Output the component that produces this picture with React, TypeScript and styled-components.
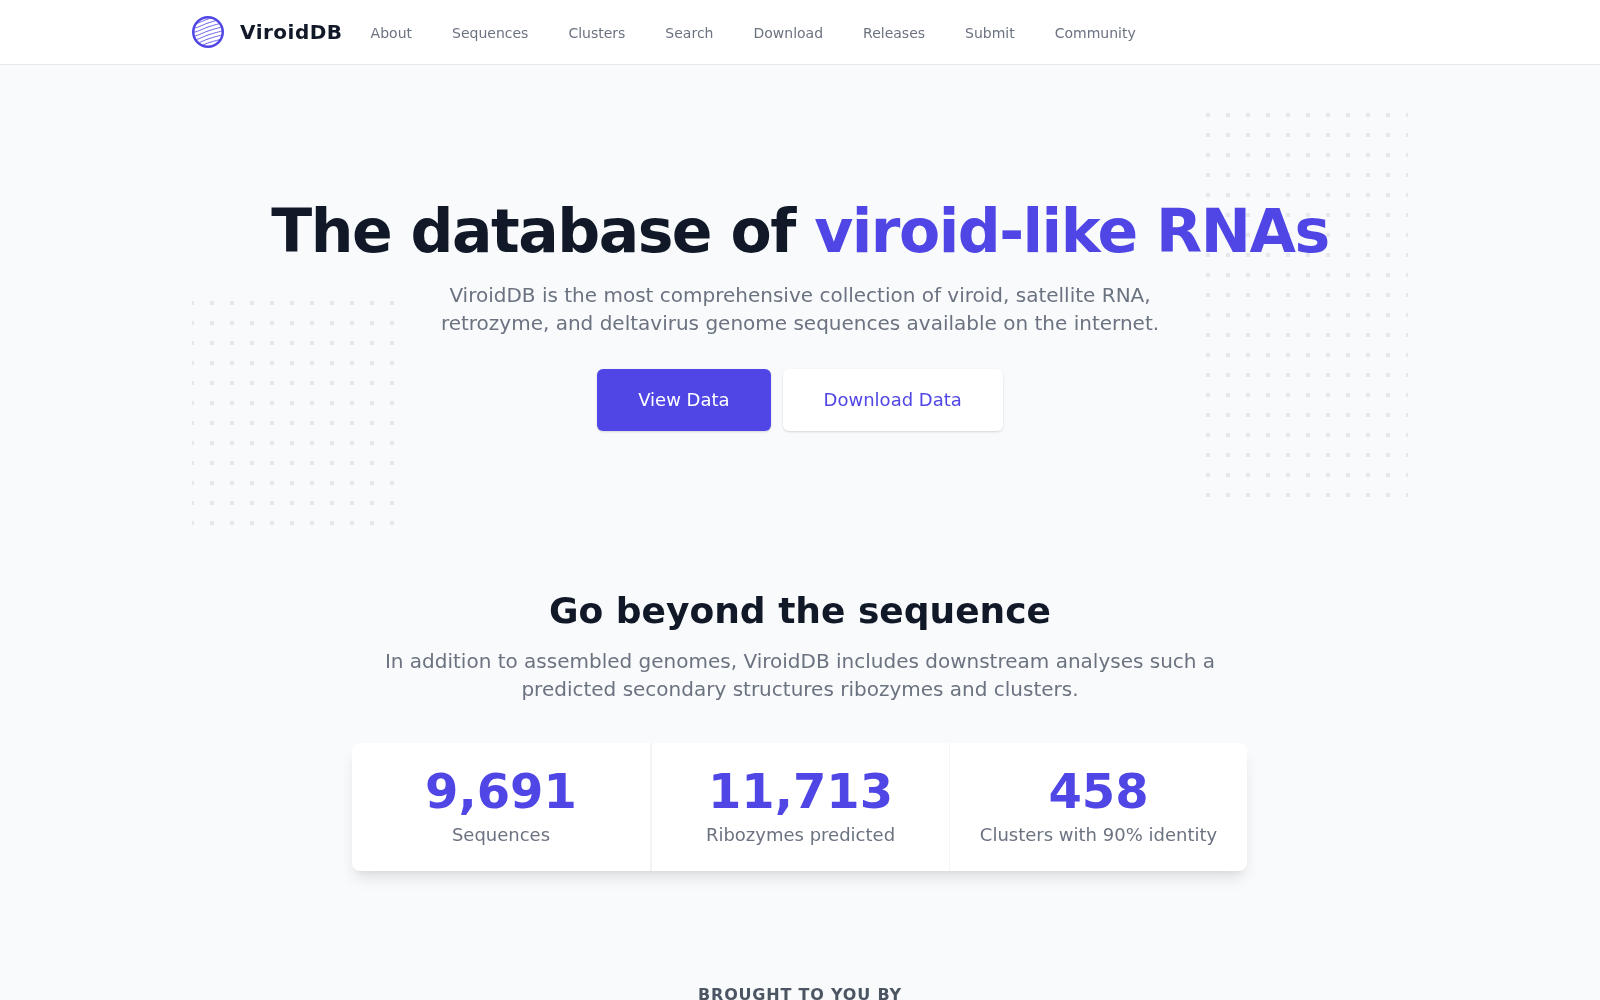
import React from "react";
import styled, { createGlobalStyle } from "styled-components";

const Global = createGlobalStyle`
  html, body { margin: 0; padding: 0; background: #f9fafb; }
  body { font-family: "DejaVu Sans", sans-serif; line-height: 1.5; -webkit-font-smoothing: antialiased; }
  #root { height: 1000px; overflow: hidden; will-change: transform; }
  * { box-sizing: border-box; }
`;

const Header = styled.header`
  height: 65px;
  background: #fff;
  border-bottom: 1px solid #e5e7eb;
`;
const HeaderInner = styled.div`
  width: 1216px;
  height: 64px;
  margin: 0 auto;
  display: flex;
  align-items: center;
`;
const Brand = styled.a`
  display: flex;
  align-items: center;
  gap: 16px;
  margin-right: 28px;
`;
const BrandName = styled.span`
  font-size: 20px;
  font-weight: 700;
  letter-spacing: 0.5px;
  color: #111827;
`;
const Nav = styled.nav`
  display: flex;
  gap: 40px;
`;
const NavLink = styled.a`
  padding-top: 4px;
  border-bottom: 2px solid transparent;
  font-size: 14px;
  line-height: 20px;
  color: #6b7280;
`;

const Hero = styled.section`
  position: relative;
  width: 1216px;
  margin: 0 auto;
  padding-top: 136px;
  text-align: center;
`;
const Dots = styled.svg<{ $side: "left" | "right" }>`
  position: absolute;
  ${(p) => (p.$side === "left" ? "left: 0; top: 236px;" : "right: 0; top: 48px;")}
`;
const Title = styled.h1`
  position: relative;
  margin: 0;
  font-size: 60px;
  line-height: 60px;
  font-weight: 800;
  letter-spacing: -1.5px;
  color: #111827;
`;
const Accent = styled.span`
  color: #4f46e5;
`;
const Lead = styled.p`
  position: relative;
  margin: 20px auto 0;
  max-width: 768px;
  font-size: 20px;
  line-height: 28px;
  color: #6b7280;
`;
const Actions = styled.div`
  position: relative;
  display: flex;
  justify-content: center;
  gap: 12px;
  margin-top: 32px;
`;
const Button = styled.a<{ $primary?: boolean }>`
  display: block;
  padding: 16px 40px;
  font-size: 18px;
  line-height: 28px;
  font-weight: 500;
  border: 1px solid transparent;
  border-radius: 6px;
  color: ${(p) => (p.$primary ? "#fff" : "#4f46e5")};
  background: ${(p) => (p.$primary ? "#4f46e5" : "#fff")};
  box-shadow: 0 1px 3px 0 rgba(0, 0, 0, 0.1), 0 1px 2px 0 rgba(0, 0, 0, 0.06);
`;

const Beyond = styled.section`
  margin-top: 160px;
  text-align: center;
`;
const Heading = styled.h2`
  margin: 0;
  font-size: 36px;
  line-height: 40px;
  font-weight: 800;
  color: #111827;
`;
const SubLead = styled.p`
  margin: 16px auto 0;
  max-width: 896px;
  font-size: 20px;
  line-height: 28px;
  color: #6b7280;
`;
const Stats = styled.dl`
  margin: 40px 0 0 352px;
  width: 895px;
  display: grid;
  grid-template-columns: 299px 299px 297px;
  background: #fff;
  border-radius: 8px;
  box-shadow: 0 10px 15px -3px rgba(0, 0, 0, 0.1), 0 4px 6px -2px rgba(0, 0, 0, 0.05);
`;
const Stat = styled.div<{ $left?: boolean; $right?: boolean }>`
  display: flex;
  flex-direction: column;
  padding: 24px;
  text-align: center;
  border-left: ${(p) => (p.$left ? "1px solid #f3f4f6" : "0")};
  border-right: ${(p) => (p.$right ? "1px solid #f3f4f6" : "0")};
`;
const StatValue = styled.dd`
  order: 1;
  margin: 0;
  font-size: 48px;
  line-height: 48px;
  font-weight: 800;
  color: #4f46e5;
`;
const StatLabel = styled.dt`
  order: 2;
  margin-top: 8px;
  font-size: 18px;
  line-height: 24px;
  font-weight: 500;
  color: #6b7280;
`;
const Credits = styled.p`
  margin: 112px 0 0;
  text-align: center;
  font-size: 16px;
  line-height: 24px;
  font-weight: 600;
  letter-spacing: 0.8px;
  color: #4b5563;
`;

const stripes = [-4, 0, 4, 8, 12, 16, 20, 24, 28, 32, 36, 40];

const Logo = () => (
  <svg width="32" height="32" viewBox="0 0 32 32" fill="none">
    <defs>
      <clipPath id="logo-clip">
        <circle cx="16" cy="16" r="14" />
      </clipPath>
    </defs>
    <g clipPath="url(#logo-clip)" stroke="#6a63ea" strokeWidth="1" fill="none">
      {stripes.map((y) => (
        <path key={y} d={`M-2 ${y + 5}C6 ${y + 4} 10 ${y + 1} 16 ${y - 1}S26 ${y - 4} 34 ${y - 6}`} />
      ))}
    </g>
    <circle cx="16" cy="16" r="14.75" stroke="#4f46e5" strokeWidth="2.5" />
  </svg>
);

const DotField = ({ id, side, width, height, offset }: { id: string; side: "left" | "right"; width: number; height: number; offset: number }) => (
  <Dots $side={side} width={width} height={height} viewBox={`0 0 ${width} ${height}`}>
    <defs>
      <pattern id={id} x={offset} y="0" width="20" height="20" patternUnits="userSpaceOnUse">
        <rect width="4" height="4" fill="#e5e7eb" />
      </pattern>
    </defs>
    <rect width={width} height={height} fill={`url(#${id})`} />
  </Dots>
);

const links = ["About", "Sequences", "Clusters", "Search", "Download", "Releases", "Submit", "Community"];
const stats = [
  ["9,691", "Sequences"],
  ["11,713", "Ribozymes predicted"],
  ["458", "Clusters with 90% identity"],
];

export default function App() {
  return (
    <>
      <Global />
      <Header>
        <HeaderInner>
          <Brand>
            <Logo />
            <BrandName>ViroidDB</BrandName>
          </Brand>
          <Nav>
            {links.map((l) => (
              <NavLink key={l}>{l}</NavLink>
            ))}
          </Nav>
        </HeaderInner>
      </Header>
      <Hero>
        <DotField id="dots-right" side="right" width={202} height={385} offset={0} />
        <DotField id="dots-left" side="left" width={203} height={225} offset={-2} />
        <Title>
          The database of <Accent>viroid-like RNAs</Accent>
        </Title>
        <Lead>
          ViroidDB is the most comprehensive collection of viroid, satellite RNA, retrozyme, and deltavirus genome
          sequences available on the internet.
        </Lead>
        <Actions>
          <Button $primary>View Data</Button>
          <Button>Download Data</Button>
        </Actions>
      </Hero>
      <Beyond>
        <Heading>Go beyond the sequence</Heading>
        <SubLead>
          In addition to assembled genomes, ViroidDB includes downstream analyses such a predicted secondary structures
          ribozymes and clusters.
        </SubLead>
        <Stats>
          {stats.map(([value, label], i) => (
            <Stat key={label} $left={i === 1} $right={i < 2}>
              <StatValue>{value}</StatValue>
              <StatLabel>{label}</StatLabel>
            </Stat>
          ))}
        </Stats>
      </Beyond>
      <Credits>BROUGHT TO YOU BY</Credits>
    </>
  );
}
